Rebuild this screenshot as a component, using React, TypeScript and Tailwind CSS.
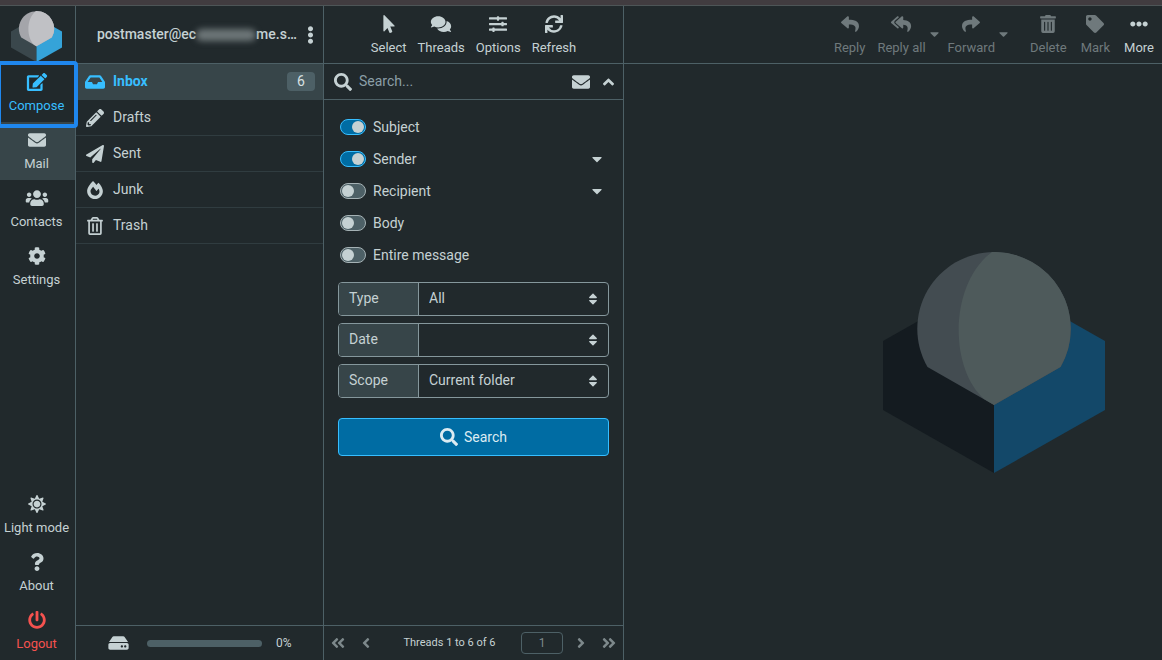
import React from 'react';
import type { IconType } from 'react-icons';
import {
  FaAngleDoubleLeft,
  FaAngleDoubleRight,
  FaAngleLeft,
  FaAngleRight,
  FaAngleUp,
  FaCaretDown,
  FaCog,
  FaComments,
  FaEdit,
  FaEllipsisH,
  FaEllipsisV,
  FaEnvelope,
  FaFireAlt,
  FaHdd,
  FaInbox,
  FaMousePointer,
  FaPaperPlane,
  FaPencilAlt,
  FaPowerOff,
  FaQuestion,
  FaRegTrashAlt,
  FaReply,
  FaReplyAll,
  FaSearch,
  FaShare,
  FaSlidersH,
  FaSort,
  FaSun,
  FaSync,
  FaTag,
  FaTrashAlt,
  FaUsers,
} from 'react-icons/fa';

interface LogoProps {
  className: string;
  left: string;
  right: string;
  shade: string;
  ball: string;
}

const Logo: React.FC<LogoProps> = ({ className, left, right, shade, ball }) => (
  <svg viewBox="0 0 222 221" className={className} aria-hidden="true">
    <path fill={left} d="M0 89 60 55 111 153V221L0 158Z" />
    <path fill={right} d="M222 89 162 55 111 153V221L222 158Z" />
    <path fill={shade} d="M44.500 115A76.700 76.700 0 1 1 177.500 115L111 153Z" />
    <path fill={ball} d="M109 0C66 32 66 116 101 147L111 153 177.500 115A76.700 76.700 0 0 0 109 0Z" />
  </svg>
);

interface TaskItemProps {
  icon: IconType;
  label: string;
  className?: string;
}

const TaskItem: React.FC<TaskItemProps> = ({ icon: Icon, label, className = 'text-[#c5d1d3]' }) => (
  <a href="#" className={`flex h-[58px] flex-col items-center gap-[5px] pt-[9px] pr-0.5 text-[13px] leading-5 ${className}`}>
    <Icon className="h-[18px] w-6" />
    <span className="whitespace-nowrap">{label}</span>
  </a>
);

interface ToolButtonProps {
  icon: IconType;
  label: string;
  disabled?: boolean;
}

const ToolButton: React.FC<ToolButtonProps> = ({ icon: Icon, label, disabled }) => (
  <button type="button" disabled={disabled} className="flex flex-col items-center gap-[5px] text-[13px] leading-5 disabled:text-[#6f797c]">
    <Icon className="h-[18px] w-6" />
    <span className="whitespace-nowrap">{label}</span>
  </button>
);

const MenuCaret: React.FC<{ label: string }> = ({ label }) => (
  <button type="button" disabled aria-label={label} className="ml-1 self-start pt-3 text-[#6f797c]">
    <FaCaretDown className="h-3.5 w-[9px]" />
  </button>
);

const folders = [
  { name: 'Inbox', icon: FaInbox, count: 6 },
  { name: 'Drafts', icon: FaPencilAlt },
  { name: 'Sent', icon: FaPaperPlane },
  { name: 'Junk', icon: FaFireAlt },
  { name: 'Trash', icon: FaRegTrashAlt },
];

const scopes = [
  { id: 'subject', label: 'Subject', on: true },
  { id: 'sender', label: 'Sender', on: true, menu: true },
  { id: 'recipient', label: 'Recipient', on: false, menu: true },
  { id: 'body', label: 'Body', on: false },
  { id: 'entire', label: 'Entire message', on: false },
];

const filters = [
  { id: 'type', label: 'Type', value: 'All' },
  { id: 'date', label: 'Date', value: '' },
  { id: 'scope', label: 'Scope', value: 'Current folder' },
];

const TaskMenu = () => (
  <nav className="flex w-[76px] shrink-0 flex-col border-r border-[#4d6066]">
    <div className="flex h-[58px] items-start justify-center pt-[5px] pr-0.5">
      <Logo className="h-[51px] w-[51px]" left="#3a474c" right="#35a3d9" shade="#a4a5aa" ball="#c0c1c5" />
    </div>
    <TaskItem
      icon={FaEdit}
      label="Compose"
      className="relative z-10 text-[#37beff] after:absolute after:-inset-x-[3px] after:-top-[3px] after:-bottom-1.5 after:rounded-sm after:border-4 after:border-[#1f87ee]"
    />
    <TaskItem icon={FaEnvelope} label="Mail" className="bg-[#374549] text-[#c5d1d3]" />
    <TaskItem icon={FaUsers} label="Contacts" />
    <TaskItem icon={FaCog} label="Settings" />
    <div className="mt-auto">
      <TaskItem icon={FaSun} label="Light mode" />
      <TaskItem icon={FaQuestion} label="About" />
      <TaskItem icon={FaPowerOff} label="Logout" className="text-[#f5524f]" />
    </div>
  </nav>
);

const FolderPane = () => (
  <section className="flex w-[248px] shrink-0 flex-col border-r border-[#4d6066]">
    <header className="flex h-[58px] items-center border-b border-[#4d6066] pr-[9px] pl-[21px]">
      <h1 className="flex items-center text-[14px] font-medium whitespace-nowrap">
        postmaster@ec
        <span className="h-3 w-[60px] rounded-full bg-[#6d7678] blur-[3px]" />
        me.s…
      </h1>
      <button type="button" aria-label="Account menu" className="ml-auto">
        <FaEllipsisV className="h-[18px] w-[7px]" />
      </button>
    </header>
    <ul>
      {folders.map(({ name, icon: Icon, count }) => (
        <li key={name}>
          <a
            href="#"
            className={`flex h-9 items-center gap-2 border-b pr-2 pl-[9px] text-[14px] ${
              count ? 'border-[#374549] bg-[#374549] font-bold text-[#37beff]' : 'border-[#303c40]'
            }`}
          >
            <Icon className="h-[18px] w-5" />
            {name}
            {count && (
              <span className="ml-auto w-7 rounded-sm bg-[#4d6066] text-center leading-[19px] font-normal text-[#d8e0e2]">{count}</span>
            )}
          </a>
        </li>
      ))}
    </ul>
    <footer className="mt-auto flex h-[35px] items-center border-t border-[#4d6066] pl-8 text-[12px]">
      <FaHdd className="h-[18px] w-[21px]" />
      <div className="ml-[18px] h-[7px] w-[115px] rounded-full bg-[#4d6066]" />
      <span className="ml-3.5">0%</span>
    </footer>
  </section>
);

const SearchForm = () => (
  <form className="flex flex-col px-3.5 pt-[11px] text-[14px]">
    {scopes.map(({ id, label, on, menu }) => (
      <div key={id} className="flex h-8 items-center pl-0.5">
        <input
          id={id}
          type="checkbox"
          defaultChecked={on}
          className="h-4 w-[26px] appearance-none rounded-full border border-[#a5b2b5] bg-[#4d6066] p-px before:block before:size-3 before:rounded-full before:bg-[#c5d1d3] checked:border-[#37beff] checked:bg-[#006ca3] checked:before:ml-2.5"
        />
        <label htmlFor={id} className="pl-[7px]">{label}</label>
        {menu && (
          <button type="button" aria-label={`${label} fields`} className="mr-[7px] ml-auto">
            <FaCaretDown className="h-4 w-2.5" />
          </button>
        )}
      </div>
    ))}
    <div className="mt-[11px] flex flex-col gap-[7px]">
      {filters.map(({ id, label, value }) => (
        <div key={id} className="relative flex h-[34px] overflow-hidden rounded-sm border border-[#85979c]">
          <label htmlFor={id} className="flex w-20 items-center border-r border-[#85979c] bg-[#374549] pb-0.5 pl-2.5">{label}</label>
          <select id={id} className="min-w-0 flex-1 appearance-none bg-transparent px-2.5 pb-0.5">
            <option>{value}</option>
          </select>
          <FaSort className="pointer-events-none absolute top-[9px] right-2.5 h-3.5 w-2.5" />
        </div>
      ))}
    </div>
    <button type="submit" className="mt-5 flex h-[38px] items-center justify-center gap-1.5 rounded-sm border border-[#37beff] bg-[#006ca3] text-[#dcebf2]">
      <FaSearch className="size-[18px]" />
      Search
    </button>
  </form>
);

const ListPane = () => (
  <section className="flex w-[300px] shrink-0 flex-col border-r border-[#4d6066]">
    <header className="flex h-[58px] items-start justify-center gap-[11px] border-b border-[#4d6066] pt-[9px]">
      <ToolButton icon={FaMousePointer} label="Select" />
      <ToolButton icon={FaComments} label="Threads" />
      <ToolButton icon={FaSlidersH} label="Options" />
      <ToolButton icon={FaSync} label="Refresh" />
    </header>
    <div className="flex h-9 items-center border-b border-[#4d6066] pr-[9px] pl-2.5">
      <FaSearch className="size-[18px]" />
      <input aria-label="Search" placeholder="Search..." className="ml-[7px] min-w-0 flex-1 bg-transparent text-[14px] outline-none placeholder:text-[#8b9fa7]" />
      <button type="button" aria-label="Unread messages">
        <FaEnvelope className="size-[18px]" />
      </button>
      <button type="button" aria-label="Search options" className="ml-[13px]">
        <FaAngleUp className="h-[18px] w-[11px]" />
      </button>
    </div>
    <SearchForm />
    <footer className="mt-auto flex h-[35px] items-center border-t border-[#4d6066] px-[7px] text-[12px]">
      <div className="flex items-center gap-[17px] text-[#7d888b]">
        <button type="button" aria-label="First page"><FaAngleDoubleLeft className="h-[18px] w-3.5" /></button>
        <button type="button" aria-label="Previous page"><FaAngleLeft className="h-[18px] w-2" /></button>
      </div>
      <span className="flex-1 pl-2 text-center text-[11px]">Threads 1 to 6 of 6</span>
      <div className="flex items-center gap-[17px] text-[#7d888b]">
        <input aria-label="Page" defaultValue="1" className="-mr-[3px] h-[22px] w-[42px] rounded-sm border border-[#4d6066] bg-transparent text-center" />
        <button type="button" aria-label="Next page"><FaAngleRight className="h-[18px] w-2" /></button>
        <button type="button" aria-label="Last page"><FaAngleDoubleRight className="h-[18px] w-3.5" /></button>
      </div>
    </footer>
  </section>
);

const ContentPane = () => (
  <main className="flex min-w-0 flex-1 flex-col">
    <header className="flex h-[58px] items-start justify-end border-b border-[#4d6066] pt-[9px] pr-2">
      <div className="flex gap-3">
        <ToolButton icon={FaReply} label="Reply" disabled />
        <div className="flex">
          <ToolButton icon={FaReplyAll} label="Reply all" disabled />
          <MenuCaret label="Reply all options" />
        </div>
      </div>
      <div className="ml-[9px] flex">
        <ToolButton icon={FaShare} label="Forward" disabled />
        <MenuCaret label="Forward options" />
      </div>
      <div className="ml-[22px] flex gap-3.5">
        <ToolButton icon={FaTrashAlt} label="Delete" disabled />
        <ToolButton icon={FaTag} label="Mark" disabled />
        <ToolButton icon={FaEllipsisH} label="More" />
      </div>
    </header>
    <div className="flex flex-1 items-center justify-center pl-[202px]">
      <Logo className="w-[222px]" left="#141b20" right="#134869" shade="#434c51" ball="#4e5a5b" />
    </div>
  </main>
);

export default function App() {
  return (
    <div className="flex h-screen flex-col bg-[#21292c] font-[Roboto,sans-serif] text-[#c5d1d3]">
      <div className="h-1.5 shrink-0 border-b border-[#4d5557] bg-[#413c40]" />
      <div className="flex min-h-0 flex-1">
        <TaskMenu />
        <FolderPane />
        <ListPane />
        <ContentPane />
      </div>
    </div>
  );
}
